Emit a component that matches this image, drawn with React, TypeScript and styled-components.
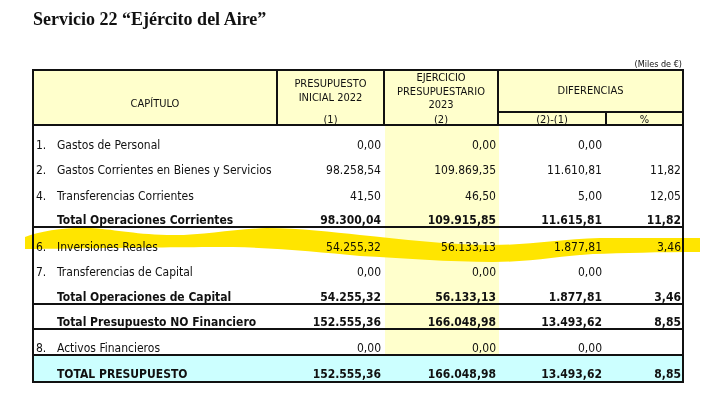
import React from "react";
import styled, { createGlobalStyle } from "styled-components";

const GlobalStyle = createGlobalStyle`
  html, body { margin: 0; padding: 0; background: #ffffff; }
`;

const INK = "#111111";
const RULE = `2px solid ${INK}`;
const CREAM = "#FFFFCC";
const CYAN = "#CCFFFF";
const COLS = "244px 107px 114px 108px 75px";

const Page = styled.div`
  position: relative;
  width: 720px;
  height: 415px;
  overflow: hidden;
  color: ${INK};
  font-family: "DejaVu Sans Condensed", "DejaVu Sans", sans-serif;
`;

const Title = styled.h1`
  margin: 0;
  padding: 9px 0 0 33px;
  font-family: "Liberation Serif", "Times New Roman", serif;
  font-weight: bold;
  font-size: 18px;
  line-height: 20px;
`;

const Units = styled.div`
  width: 652px;
  margin: 30px 0 0 32px;
  box-sizing: border-box;
  padding-right: 2px;
  text-align: right;
  font-size: 9px;
  line-height: 10px;
`;

const Table = styled.div`
  width: 652px;
  margin-left: 32px;
  box-sizing: border-box;
  border: ${RULE};
  display: grid;
  grid-template-columns: ${COLS};
`;

const HeadCell = styled.div<{ $col: string; $row: string; $last?: boolean; $pad?: number; $h?: number }>`
  grid-column: ${(p) => p.$col};
  grid-row: ${(p) => p.$row};
  background: ${CREAM};
  box-sizing: border-box;
  border-bottom: ${RULE};
  border-right: ${(p) => (p.$last ? "none" : RULE)};
  ${(p) => (p.$h ? `height: ${p.$h}px;` : "")}
  padding-top: ${(p) => p.$pad ?? 0}px;
  display: flex;
  flex-direction: column;
  align-items: center;
  text-align: center;
  font-size: 11px;
  line-height: 13.5px;
`;

const HeadCentered = styled(HeadCell)`
  justify-content: center;
  padding-top: 0;
`;

const HeadBottom = styled(HeadCell)`
  justify-content: flex-end;
  padding-top: 0;
  line-height: 8px;
`;

const HeadSub = styled.div`
  margin-top: auto;
  line-height: 8px;
`;

const Row = styled.div<{ $rule?: boolean; $bold?: boolean; $grand?: boolean }>`
  grid-column: 1 / -1;
  display: grid;
  grid-template-columns: ${COLS};
  height: 25.5px;
  box-sizing: border-box;
  border-bottom: ${(p) => (p.$rule ? RULE : "none")};
  background: ${(p) => (p.$grand ? CYAN : "transparent")};
  font-weight: ${(p) => (p.$bold ? "bold" : "normal")};
  font-size: 12px;
  line-height: 12px;
`;

const LabelCell = styled.div<{ $rule?: boolean }>`
  display: flex;
  align-items: flex-end;
  padding: 0 0 ${(p) => (p.$rule ? 0 : 1)}px 2px;
  white-space: nowrap;
`;

const Ordinal = styled.span`
  width: 21px;
  flex: none;
`;

const PADS = [0, 4, 3, 5, 1];

const AmountCell = styled.div<{ $col: number; $fill?: boolean; $rule?: boolean }>`
  display: flex;
  align-items: flex-end;
  justify-content: flex-end;
  padding: 0 ${(p) => PADS[p.$col]}px ${(p) => (p.$rule ? 0 : 1)}px 0;
  background: ${(p) => (p.$fill ? CREAM : "transparent")};
  white-space: nowrap;
`;

const Highlight = styled.svg`
  position: absolute;
  left: 0;
  top: 0;
  width: 720px;
  height: 415px;
  pointer-events: none;
  mix-blend-mode: multiply;
`;

type Line = {
  n?: string;
  label: string;
  v: [string, string, string, string];
  bold?: boolean;
  rule?: boolean;
  grand?: boolean;
};

const lines: Line[] = [
  { n: "1.", label: "Gastos de Personal", v: ["0,00", "0,00", "0,00", ""] },
  { n: "2.", label: "Gastos Corrientes en Bienes y Servicios", v: ["98.258,54", "109.869,35", "11.610,81", "11,82"] },
  { n: "4.", label: "Transferencias Corrientes", v: ["41,50", "46,50", "5,00", "12,05"] },
  { label: "Total Operaciones Corrientes", v: ["98.300,04", "109.915,85", "11.615,81", "11,82"], bold: true, rule: true },
  { n: "6.", label: "Inversiones Reales", v: ["54.255,32", "56.133,13", "1.877,81", "3,46"] },
  { n: "7.", label: "Transferencias de Capital", v: ["0,00", "0,00", "0,00", ""] },
  { label: "Total Operaciones de Capital", v: ["54.255,32", "56.133,13", "1.877,81", "3,46"], bold: true, rule: true },
  { label: "Total Presupuesto NO Financiero", v: ["152.555,36", "166.048,98", "13.493,62", "8,85"], bold: true, rule: true },
  { n: "8.", label: "Activos Financieros", v: ["0,00", "0,00", "0,00", ""], rule: true },
  { label: "TOTAL PRESUPUESTO", v: ["152.555,36", "166.048,98", "13.493,62", "8,85"], bold: true, grand: true },
];

export default function App() {
  return (
    <>
      <GlobalStyle />
      <Page>
        <Title>Servicio 22 “Ejército del Aire”</Title>
        <Units>(Miles de €)</Units>
        <Table>
          <HeadCell $col="1" $row="1 / 3" $pad={26}>
            CAPÍTULO
          </HeadCell>
          <HeadCell $col="2" $row="1 / 3" $pad={6}>
            <div>PRESUPUESTO</div>
            <div>INICIAL 2022</div>
            <HeadSub>(1)</HeadSub>
          </HeadCell>
          <HeadCell $col="3" $row="1 / 3" $pad={0}>
            <div>EJERCICIO</div>
            <div>PRESUPUESTARIO</div>
            <div>2023</div>
            <HeadSub>(2)</HeadSub>
          </HeadCell>
          <HeadCentered $col="4 / 6" $row="1" $last $h={42}>
            DIFERENCIAS
          </HeadCentered>
          <HeadBottom $col="4" $row="2" $h={13}>
            (2)-(1)
          </HeadBottom>
          <HeadBottom $col="5" $row="2" $last $h={13}>
            %
          </HeadBottom>
          {lines.map((l, i) => (
            <Row key={i} $rule={l.rule} $bold={l.bold} $grand={l.grand}>
              <LabelCell $rule={l.rule}>
                <Ordinal>{l.n ?? ""}</Ordinal>
                {l.label}
              </LabelCell>
              {l.v.map((val, c) => (
                <AmountCell key={c} $col={c + 1} $fill={c === 1 && !l.grand} $rule={l.rule}>
                  {val}
                </AmountCell>
              ))}
            </Row>
          ))}
        </Table>
        <Highlight viewBox="0 0 720 415">
          <path
            fill="#FFE500"
            d="M25,237 C40,231 68,227 90,228 C112,229 132,234 167,235 C200,236 232,229 267,228 C300,228 332,232 360,235 C400,239 450,245 493,245 C530,245 560,239 600,238 L700,238 L700,252 C660,252 622,253 593,254 C560,256 530,262 493,262 C450,262 400,258 360,256 C320,252 280,248 233,247 C150,247 60,249 25,249 Z"
          />
        </Highlight>
      </Page>
    </>
  );
}
